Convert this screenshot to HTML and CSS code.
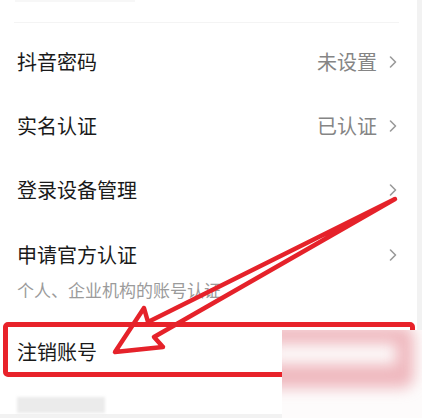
FILE: index.html
```html
<!DOCTYPE html>
<html lang="zh-CN">
<head>
<meta charset="utf-8">
<title>账号与安全</title>
<link rel="stylesheet" href="styles.css">
</head>
<body>
<div class="screen">
  <div class="panel">
    <div class="top-area"><div class="top-fade"></div></div>
    <div class="divider"></div>
    <div class="spacer"></div>
    <div class="row">
      <span class="title">抖音密码</span>
      <span class="value">未设置</span>
      <svg class="chev" viewBox="0 0 8 12"><polyline points="1.5,1 6.5,6 1.5,11"/></svg>
    </div>
    <div class="row">
      <span class="title">实名认证</span>
      <span class="value">已认证</span>
      <svg class="chev" viewBox="0 0 8 12"><polyline points="1.5,1 6.5,6 1.5,11"/></svg>
    </div>
    <div class="row">
      <span class="title">登录设备管理</span>
      <span class="value"></span>
      <svg class="chev" viewBox="0 0 8 12"><polyline points="1.5,1 6.5,6 1.5,11"/></svg>
    </div>
    <div class="row row-tall">
      <div class="col">
        <span class="title">申请官方认证</span>
        <span class="sub">个人、企业机构的账号认证</span>
      </div>
      <svg class="chev chev-top" viewBox="0 0 8 12"><polyline points="1.5,1 6.5,6 1.5,11"/></svg>
    </div>
    <div class="row-mark">
      <span class="title">注销账号</span>
    </div>
    <div class="footer"><div class="blur-block"></div></div>
  </div>
  <svg class="arrow" viewBox="0 0 422 418" width="422" height="418">
    <polygon points="395,199 148,322 144,308 115,352 163,347 154,337"/>
  </svg>
  <div class="watermark"><div class="wm-ring"></div></div>
</div>
</body>
</html>
```

FILE: styles.css
```css
html, body {
  margin: 0;
  padding: 0;
}
body {
  background: #f2f2f2;
  font-family: "Noto Sans CJK SC", "Noto Sans", sans-serif;
}
.screen {
  position: relative;
  width: 422px;
  height: 418px;
  overflow: hidden;
  background: #f2f2f2;
}
.panel {
  width: 417px;
  background: #ffffff;
  padding-bottom: 1px;
}
.top-area {
  height: 22px;
  padding-left: 15px;
}
.top-fade {
  width: 120px;
  height: 2px;
  background: #f7f7f7;
}
.divider {
  height: 1px;
  margin: 0 18px 0 14px;
  background: #f4f4f4;
}
.spacer {
  height: 7px;
}
.row {
  display: flex;
  align-items: center;
  height: 64px;
  padding: 0 20px 0 17px;
  box-sizing: border-box;
}
.title {
  font-size: 20px;
  line-height: 28px;
  color: #1a1a1a;
  white-space: nowrap;
}
.value {
  margin-left: auto;
  font-size: 20px;
  line-height: 28px;
  color: #858585;
  white-space: nowrap;
}
.chev {
  width: 8px;
  height: 12px;
  margin-left: 12px;
  flex: none;
}
.chev polyline {
  fill: none;
  stroke: #9a9a9a;
  stroke-width: 1.6;
  stroke-linecap: round;
  stroke-linejoin: round;
}
.row-tall {
  height: 100px;
  align-items: flex-start;
  padding-top: 19px;
}
.col {
  display: flex;
  flex-direction: column;
  flex: 1;
}
.sub {
  margin-top: 10px;
  font-size: 17px;
  line-height: 22px;
  color: #9b9b9b;
  white-space: nowrap;
}
.chev-top {
  margin-top: 8px;
}
.row-mark {
  width: 412px;
  height: 55px;
  margin-left: 3px;
  box-sizing: border-box;
  border: 5px solid #e8222a;
  border-radius: 5px;
  padding: 11px 0 6px 9px;
}
.footer {
  padding: 20px 0 0 17px;
}
.blur-block {
  width: 88px;
  height: 16px;
  background: #ebebeb;
  filter: blur(1.5px);
}
.arrow {
  position: absolute;
  left: 0;
  top: 0;
  pointer-events: none;
}
.arrow polygon {
  fill: none;
  stroke: #e5222a;
  stroke-width: 4.5;
  stroke-linejoin: round;
  stroke-linecap: round;
}
.watermark {
  position: absolute;
  left: 282px;
  top: 330px;
  width: 140px;
  height: 88px;
  background: #fdfbfb;
  overflow: hidden;
}
.wm-ring {
  position: absolute;
  left: -30px;
  top: -4px;
  width: 162px;
  height: 62px;
  box-sizing: border-box;
  border-style: solid;
  border-color: rgba(230, 140, 150, 0.6);
  border-width: 18px 18px 24px 18px;
  border-radius: 12px;
  filter: blur(7px);
}
```
